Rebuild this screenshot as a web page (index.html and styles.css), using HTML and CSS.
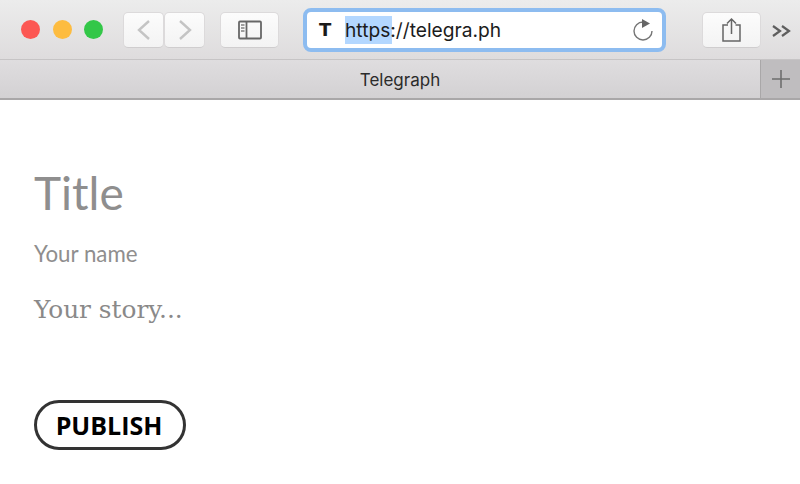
FILE: index.html
```html
<!DOCTYPE html>
<html lang="en">
<head>
    <meta charset="UTF-8">
    <meta name="viewport" content="width=device-width, initial-scale=1.0">
    <title>Telegraph</title>
    <link rel="stylesheet" href="styles.css">
</head>
<body>
    <header class="toolbar">
        <div class="lights">
            <span class="light red"></span>
            <span class="light yellow"></span>
            <span class="light green"></span>
        </div>
        <div class="nav-buttons">
            <button class="tool-btn nav-btn">
                <svg width="16" height="24" viewBox="0 0 16 24"><path d="M13 3 3 12l10 9" fill="none" stroke="#c4c4c4" stroke-width="2.400"/></svg>
            </button>
            <button class="tool-btn nav-btn">
                <svg width="16" height="24" viewBox="0 0 16 24"><path d="M3 3l10 9-10 9" fill="none" stroke="#c4c4c4" stroke-width="2.400"/></svg>
            </button>
        </div>
        <button class="tool-btn sidebar-btn">
            <svg width="24" height="20" viewBox="0 0 24 20">
                <rect x="1" y="1.500" width="22" height="17" rx="1" fill="none" stroke="#666" stroke-width="1.800"/>
                <path d="M8.500 1v18" stroke="#666" stroke-width="1.800"/>
                <path d="M3 5h3.500M3 8h3.500M3 11h3.500" stroke="#808080" stroke-width="1.300"/>
            </svg>
        </button>
        <div class="address-bar">
            <span class="site-icon">T</span>
            <span class="url"><span class="selected">https</span>://telegra.ph</span>
            <svg class="reload" width="22" height="24" viewBox="0 0 22 24">
                <path d="M11 4a9 9 0 1 0 9 9" fill="none" stroke="#757575" stroke-width="1.400"/>
                <path d="M10 1l8 4.500-8 4.500z" fill="#666"/>
            </svg>
        </div>
        <button class="tool-btn share-btn">
            <svg width="20" height="26" viewBox="0 0 20 26">
                <path d="M6 8H1v16h17V8h-4.500" fill="none" stroke="#666" stroke-width="1.500"/>
                <path d="M9.500 17V2M5 6.500 9.500 2 14 6.500" fill="none" stroke="#666" stroke-width="1.500"/>
            </svg>
        </button>
        <svg class="more" width="20" height="14" viewBox="0 0 20 14"><path d="M1 2l7 5-7 5M10 2l7 5-7 5" fill="none" stroke="#5e5e5e" stroke-width="2.200"/></svg>
    </header>

    <div class="tabbar">
        <div class="tab">Telegraph</div>
        <div class="new-tab">
            <svg width="18" height="18" viewBox="0 0 18 18"><path d="M9 0v18M0 9h18" stroke="#6e6e6e" stroke-width="1.600"/></svg>
        </div>
    </div>

    <main class="editor">
        <h1 class="title">Title</h1>
        <div class="author">Your name</div>
        <p class="story">Your story...</p>
        <button class="publish">PUBLISH</button>
    </main>
</body>
</html>
```

FILE: styles.css
```css
* {
    margin: 0;
    padding: 0;
    box-sizing: border-box;
}

html, body {
    height: 100%;
    overflow: hidden;
}

body {
    background: white;
    font-family: "Open Sans", sans-serif;
}

.toolbar {
    display: flex;
    align-items: center;
    height: 60px;
    padding-left: 21px;
    background: linear-gradient(#ececec, #dedcdd);
    border-bottom: 1px solid #c6c4c5;
}

.lights {
    display: flex;
    gap: 12.500px;
    margin-right: 20px;
}

.light {
    width: 19px;
    height: 19px;
    border-radius: 50%;
}

.red { background: #fc5753; }
.yellow { background: #fdbc40; }
.green { background: #33c748; }

.tool-btn {
    display: flex;
    align-items: center;
    justify-content: center;
    height: 36px;
    background: linear-gradient(#fcfcfc, #f3f3f3);
    border: 1px solid #dcdadb;
    border-bottom-color: #cfcdce;
    border-radius: 5px;
}

.nav-buttons {
    display: flex;
    margin-right: 15px;
}

.nav-btn {
    width: 41px;
}

.sidebar-btn {
    width: 59px;
    margin-right: 24px;
}

.address-bar {
    display: flex;
    align-items: center;
    width: 363px;
    height: 44px;
    padding: 0 8px 0 12px;
    background: white;
    border: 4px solid #8dbcf0;
    border-radius: 8px;
    margin-right: 36px;
}

.site-icon {
    width: 26px;
    font: bold 18px "DejaVu Sans", sans-serif;
    color: #1a1a1a;
}

.url {
    flex: 1;
    font: 19.200px Inter, sans-serif;
    color: #1c1c1c;
}

.selected {
    padding: 2px 2px 2px 0;
    margin-right: -2px;
    background: #b3d7ff;
}

.share-btn {
    width: 59px;
    margin-right: 11px;
}

.more {
    margin-top: 2px;
}

.tabbar {
    display: flex;
    height: 40px;
    background: linear-gradient(#dfdddf, #d3d1d3);
    border-bottom: 2px solid #a9a7a8;
}

.tab {
    flex: 1;
    padding-left: 40px;
    text-align: center;
    font: 17px/40px Inter, sans-serif;
    color: #2b2b2b;
}

.new-tab {
    display: flex;
    align-items: center;
    justify-content: center;
    width: 40px;
    background: #bfbdbf;
    border-left: 1px solid #a9a7a8;
}

.editor {
    padding: 0 34px;
}

.title {
    margin-top: 63px;
    font-family: Lato, sans-serif;
    font-size: 46px;
    font-weight: 400;
    line-height: 60px;
    color: #8f8e8e;
}

.author {
    margin-top: 17px;
    font-family: Lato, sans-serif;
    font-size: 22.300px;
    line-height: 28px;
    color: #8f8e8e;
}

.story {
    margin-top: 26px;
    font-family: "DejaVu Serif", serif;
    font-size: 24.800px;
    line-height: 32px;
    color: #8a8989;
}

.publish {
    display: block;
    width: 152px;
    height: 50px;
    margin-top: 74px;
    padding-right: 2px;
    background: white;
    border: 3px solid #333;
    border-radius: 25px;
    font-family: "Open Sans", sans-serif;
    font-size: 25px;
    font-weight: 700;
    color: #000;
}
```
